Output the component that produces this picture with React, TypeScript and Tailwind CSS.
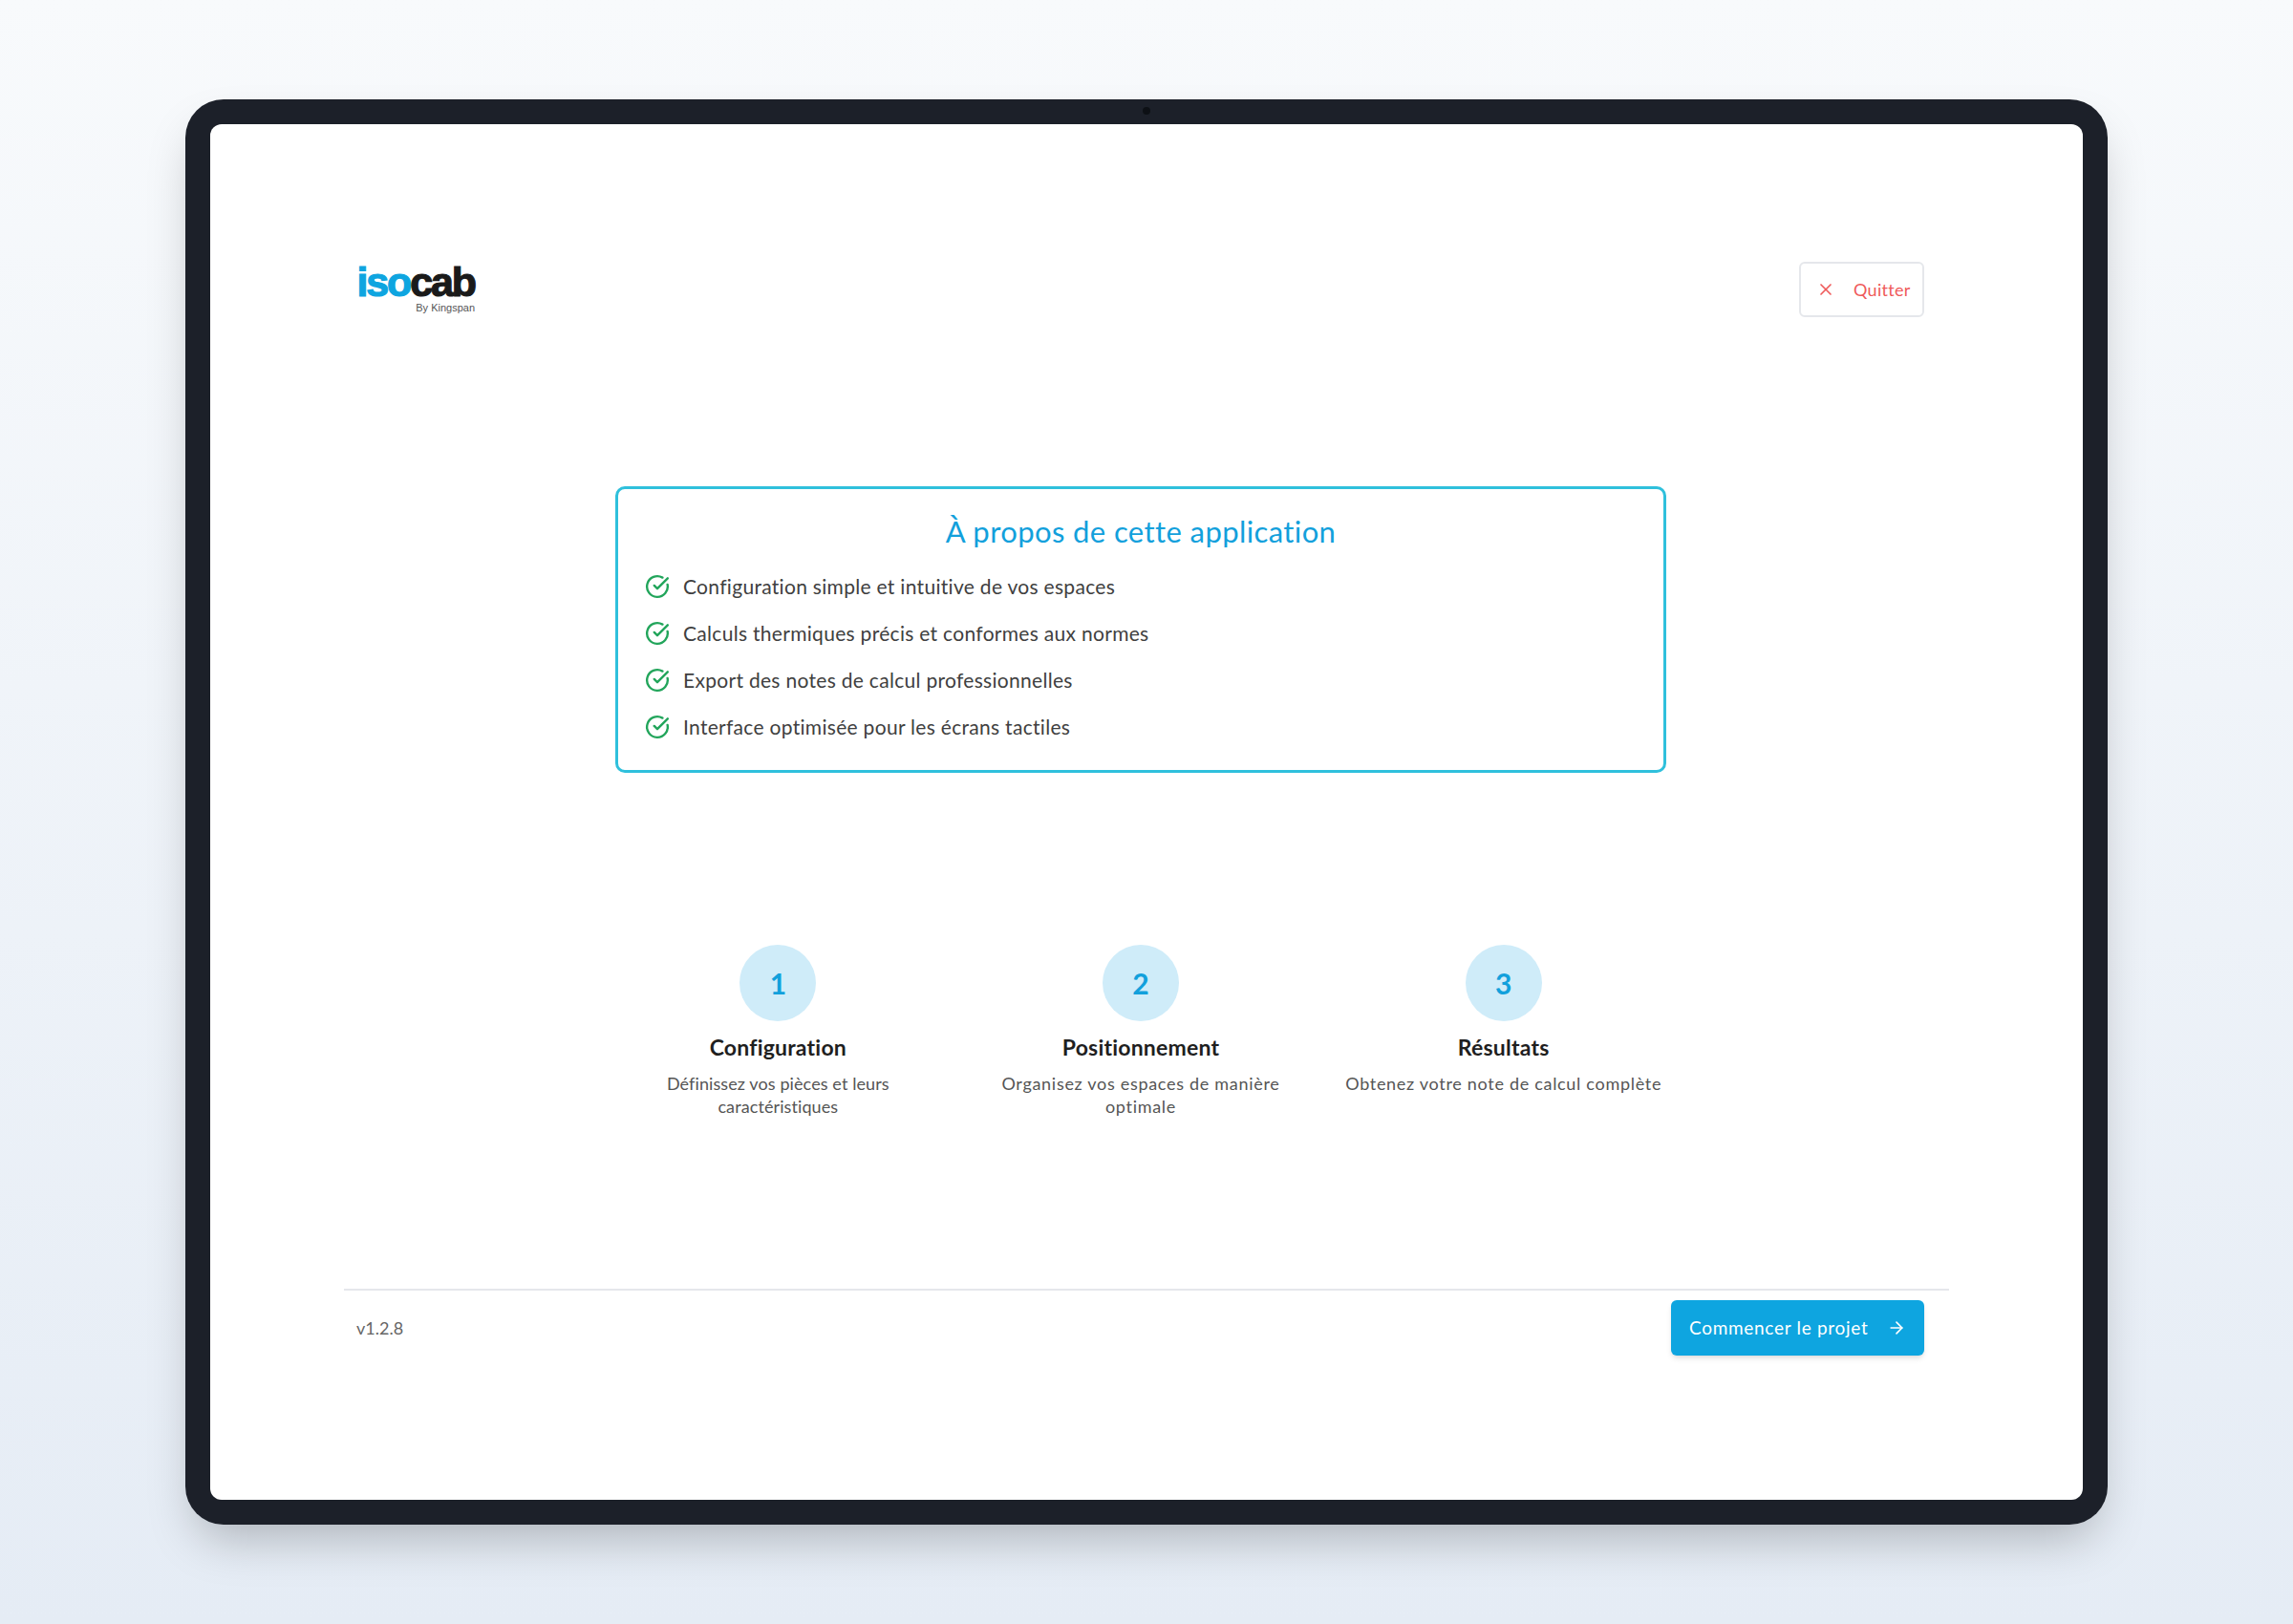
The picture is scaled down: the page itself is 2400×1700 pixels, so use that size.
import { ArrowRight, CircleCheckBig, X } from "lucide-react";

const features = [
  "Configuration simple et intuitive de vos espaces",
  "Calculs thermiques précis et conformes aux normes",
  "Export des notes de calcul professionnelles",
  "Interface optimisée pour les écrans tactiles",
];

const steps = [
  {
    num: "1",
    title: "Configuration",
    text: "Définissez vos pièces et leurs caractéristiques",
    spacing: "tracking-[0.1px]",
  },
  {
    num: "2",
    title: "Positionnement",
    text: "Organisez vos espaces de manière optimale",
    spacing: "tracking-[0.7px]",
  },
  {
    num: "3",
    title: "Résultats",
    text: "Obtenez votre note de calcul complète",
    spacing: "tracking-[0.7px]",
  },
];

function Logo() {
  return (
    <div className="flex flex-col items-end w-[124px] pt-[3px] font-['Liberation_Sans',sans-serif]">
      <div className="text-[43px] leading-[36px] font-bold tracking-[-2.1px] text-[#1a1a1a] [-webkit-text-stroke:1.2px_currentColor]">
        <span className="text-[#0ea5e0]">iso</span>cab
      </div>
      <div className="text-[11px] leading-[14px] text-[#555] mt-[2px]">By Kingspan</div>
    </div>
  );
}

export default function App() {
  return (
    <div className="h-[1700px] flex items-center justify-center bg-gradient-to-b from-[#f8fafc] to-[#e5ecf5] font-['Lato',sans-serif]">
      <div className="relative w-[2012px] h-[1492px] p-[26px] rounded-[40px] bg-[#1c2029] shadow-[0_25px_50px_-12px_rgba(0,0,0,0.25)]">
        <div className="absolute top-[8px] left-1/2 -translate-x-1/2 w-[8px] h-[8px] rounded-full bg-[#0d1015]" />
        <div className="w-full h-full bg-white rounded-[12px] flex flex-col px-[140px] pt-[144px] pb-[151px]">
          <header className="flex items-start justify-between pl-[13px] pr-[26px] h-[235px]">
            <Logo />
            <button className="flex items-center gap-[19px] w-[131px] h-[58px] pl-[16px] border-2 border-[#e5e7eb] rounded-[6px] text-[#ef5a5a] text-[18px] tracking-[0.3px]">
              <X size={20} strokeWidth={2} />
              Quitter
            </button>
          </header>

          <section className="self-start ml-[284px] w-[1100px] h-[300px] border-[3px] border-[#2fc0dc] rounded-[10px] px-[28px] pt-[24px]">
            <h2 className="text-center text-[31px] leading-[40px] text-[#12a0dc] tracking-[0.4px]">
              À propos de cette application
            </h2>
            <ul className="mt-[22px] flex flex-col gap-[17px]">
              {features.map((f) => (
                <li
                  key={f}
                  className="flex items-center gap-[14px] h-[32px] text-[21px] text-[#404040] tracking-[0.3px]"
                >
                  <CircleCheckBig size={26} strokeWidth={2.2} className="text-[#22a55b]" />
                  {f}
                </li>
              ))}
            </ul>
          </section>

          <section className="self-start ml-[284px] mt-[180px] grid grid-cols-3 gap-[39px] w-[1100px]">
            {steps.map((s) => (
              <div key={s.num} className="flex flex-col items-center text-center">
                <div className="w-[80px] h-[80px] rounded-full bg-[#cfecf9] flex items-center justify-center text-[#12a0dc] text-[30px] font-bold">
                  {s.num}
                </div>
                <h3 className="mt-[13px] text-[23px] leading-[28px] font-bold text-[#1f1f1f] tracking-[0.2px]">
                  {s.title}
                </h3>
                <p className={`mt-[12px] w-[340px] text-[18px] leading-[24px] text-[#555555] ${s.spacing}`}>
                  {s.text}
                </p>
              </div>
            ))}
          </section>

          <footer className="mt-auto border-t-2 border-[#e5e7eb] flex items-center justify-between pl-[13px] pr-[26px] pt-[10px]">
            <span className="text-[18px] text-[#666666]">v1.2.8</span>
            <button className="flex items-center justify-between h-[58px] w-[265px] pl-[19px] pr-[19px] rounded-[6px] bg-[#0ea5e0] text-white text-[19px] tracking-[0.7px] shadow-md">
              Commencer le projet
              <ArrowRight size={20} />
            </button>
          </footer>
        </div>
      </div>
    </div>
  );
}
